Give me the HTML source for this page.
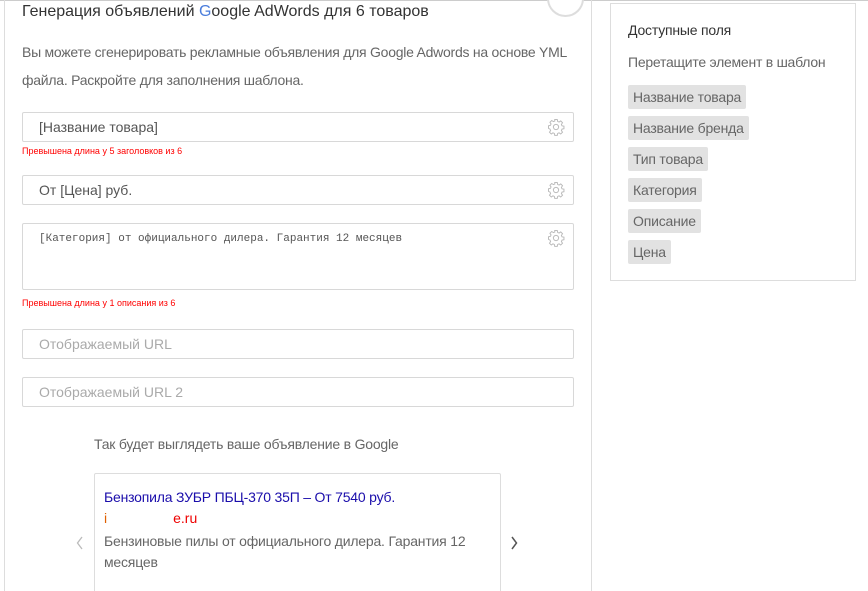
<!DOCTYPE html>
<html><head><meta charset="utf-8"><style>
html,body{margin:0;width:868px;height:591px;overflow:hidden}
body{background:#fff;font-family:"Liberation Sans",sans-serif;position:relative}
.a{position:absolute}
.inp{position:absolute;left:22px;width:550px;border:1px solid #d8d8d8;border-radius:2px;background:#fff;font-size:14px;color:#555}
.err{position:absolute;left:22px;font-size:9px;color:#f00}
.tag{display:inline-block;background:#e2e2e2;color:#666;font-size:14px;padding:4px 5px;border-radius:2px;margin-bottom:7px;letter-spacing:-0.2px}
.gear{position:absolute;right:8px;top:5px}
</style></head><body>
<div class="a" style="left:0;top:0;width:868px;height:1px;background:#ccc"></div>
<div class="a" style="left:4px;top:0;width:586px;height:591px;border-left:1px solid #ddd;border-right:1px solid #ddd"></div>
<div class="a" style="left:547px;top:-20px;width:33px;height:33px;border:2px solid #ddd;border-radius:50%;background:#fff"></div>
<div class="a" style="left:22px;top:3px;font-size:16px;color:#333">Генерация объявлений <span style="color:#4a7ddc">G</span>oogle AdWords для 6 товаров</div>
<div class="a" style="left:22px;top:38px;font-size:14px;color:#666;line-height:28px;width:570px;letter-spacing:-0.25px">Вы можете сгенерировать рекламные объявления для Google Adwords на основе YML файла. Раскройте для заполнения шаблона.</div>
<div class="inp" style="top:112px;height:28px;"><span class="a" style="left:16px;top:6px">[Название товара]</span><svg class="gear" width="18" height="18" viewBox="0 0 24 24" fill="none" stroke="#bbb" stroke-width="1.3"><circle cx="12" cy="12" r="3.5"/><path d="M10.3 2h3.4l.5 2.6 1.9.8 2.2-1.5 2.4 2.4-1.5 2.2.8 1.9 2.6.5v3.4l-2.6.5-.8 1.9 1.5 2.2-2.4 2.4-2.2-1.5-1.9.8-.5 2.6h-3.4l-.5-2.6-1.9-.8-2.2 1.5-2.4-2.4 1.5-2.2-.8-1.9L2 13.7v-3.4l2.6-.5.8-1.9-1.5-2.2 2.4-2.4 2.2 1.5 1.9-.8z"/></svg></div>
<div class="err" style="top:146px">Превышена длина у 5 заголовков из 6</div>
<div class="inp" style="top:175px;height:28px;"><span class="a" style="left:16px;top:6px">От [Цена] руб.</span><svg class="gear" width="18" height="18" viewBox="0 0 24 24" fill="none" stroke="#bbb" stroke-width="1.3"><circle cx="12" cy="12" r="3.5"/><path d="M10.3 2h3.4l.5 2.6 1.9.8 2.2-1.5 2.4 2.4-1.5 2.2.8 1.9 2.6.5v3.4l-2.6.5-.8 1.9 1.5 2.2-2.4 2.4-2.2-1.5-1.9.8-.5 2.6h-3.4l-.5-2.6-1.9-.8-2.2 1.5-2.4-2.4 1.5-2.2-.8-1.9L2 13.7v-3.4l2.6-.5.8-1.9-1.5-2.2 2.4-2.4 2.2 1.5 1.9-.8z"/></svg></div>
<div class="inp" style="top:223px;height:65px;"><span class="a" style="left:16px;top:9px;font-family:'Liberation Mono',monospace;font-size:11px;color:#555">[Категория] от официального дилера. Гарантия 12 месяцев</span><svg class="gear" width="18" height="18" viewBox="0 0 24 24" fill="none" stroke="#bbb" stroke-width="1.3"><circle cx="12" cy="12" r="3.5"/><path d="M10.3 2h3.4l.5 2.6 1.9.8 2.2-1.5 2.4 2.4-1.5 2.2.8 1.9 2.6.5v3.4l-2.6.5-.8 1.9 1.5 2.2-2.4 2.4-2.2-1.5-1.9.8-.5 2.6h-3.4l-.5-2.6-1.9-.8-2.2 1.5-2.4-2.4 1.5-2.2-.8-1.9L2 13.7v-3.4l2.6-.5.8-1.9-1.5-2.2 2.4-2.4 2.2 1.5 1.9-.8z"/></svg></div>
<div class="err" style="top:298px">Превышена длина у 1 описания из 6</div>
<div class="inp" style="top:329px;height:28px;color:#aaa"><span class="a" style="left:16px;top:6px">Отображаемый URL</span></div>
<div class="inp" style="top:377px;height:28px;color:#aaa"><span class="a" style="left:16px;top:6px">Отображаемый URL 2</span></div>
<div class="a" style="left:94px;top:436px;font-size:14px;color:#666;letter-spacing:-0.2px">Так будет выглядеть ваше объявление в Google</div>
<div class="a" style="left:94px;top:473px;width:405px;height:130px;border:1px solid #ddd;border-radius:2px"></div>
<div class="a" style="left:104px;top:489px;font-size:14px;color:#1a0dab;letter-spacing:-0.2px">Бензопила ЗУБР ПБЦ-370 35П – От 7540 руб.</div>
<div class="a" style="left:104px;top:510px;font-size:14px;color:#e00"><span style="color:#e06000">i</span><span style="margin-left:66px">e.ru</span></div>
<div class="a" style="left:104px;top:531px;font-size:14px;color:#666;line-height:21px;width:380px;letter-spacing:-0.2px">Бензиновые пилы от официального дилера. Гарантия 12 месяцев</div>
<svg class="a" style="left:76px;top:536px" width="8" height="14" viewBox="0 0 8 14"><path d="M6 1L1.5 7 6 13" fill="none" stroke="#bbb" stroke-width="1.3"/></svg>
<svg class="a" style="left:510px;top:536px" width="8" height="14" viewBox="0 0 8 14"><path d="M2 1l4.5 6L2 13" fill="none" stroke="#555" stroke-width="1.5"/></svg>
<div class="a" style="left:610px;top:3px;width:244px;height:276px;border:1px solid #ddd">
<div style="position:absolute;left:17px;top:18px;font-size:14px;color:#333;letter-spacing:-0.2px">Доступные поля</div>
<div style="position:absolute;left:17px;top:50px;font-size:14px;color:#666;letter-spacing:-0.25px">Перетащите элемент в шаблон</div>
<div style="position:absolute;left:17px;top:81px;width:200px">
<span class="tag">Название товара</span><br><span class="tag">Название бренда</span><br><span class="tag">Тип товара</span><br><span class="tag">Категория</span><br><span class="tag">Описание</span><br><span class="tag">Цена</span>
</div></div>
</body></html>
